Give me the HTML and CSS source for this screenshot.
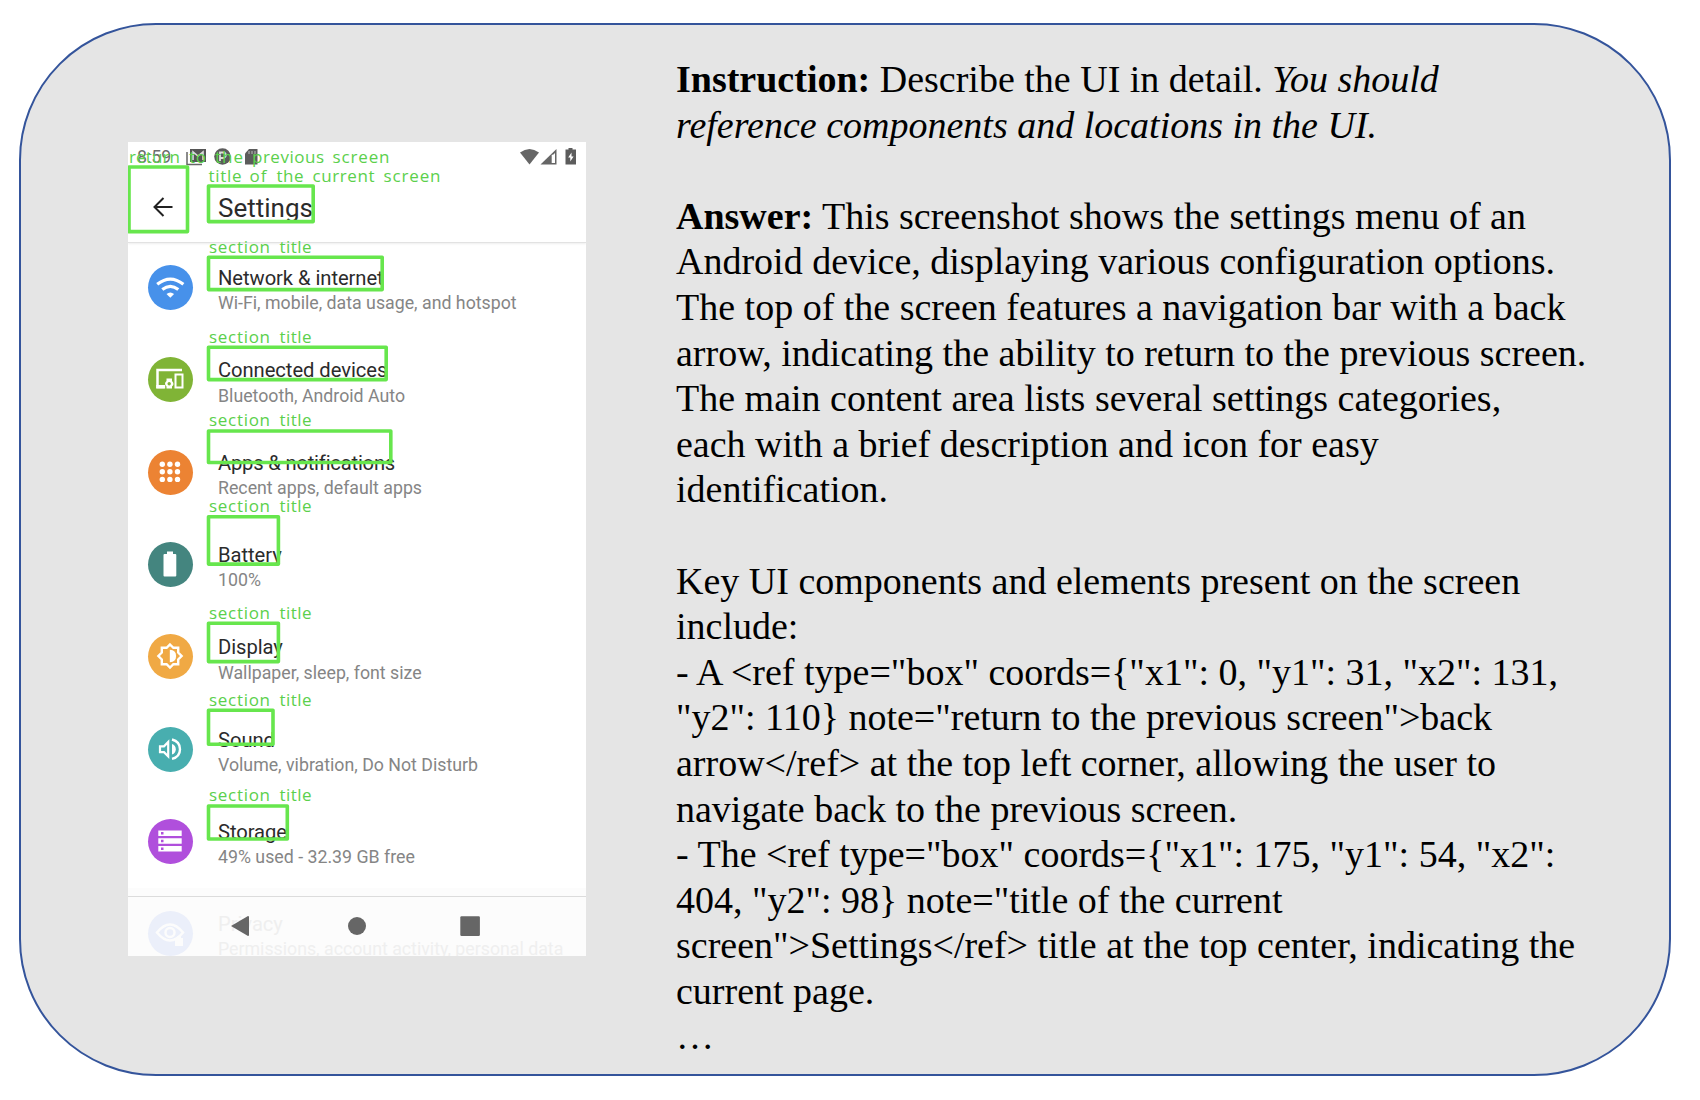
FILE: index.html
```html
<!DOCTYPE html>
<html lang="en">
<head>
<meta charset="utf-8">
<title>UI description example</title>
<link rel="stylesheet" href="styles.css">
</head>
<body>
<main class="card">
  <section class="phone">
    <header class="top">
      <div class="status">
        <span class="clock">8:59</span>
        <svg class="notif" width="74" height="18" viewBox="0 0 74 18">
          <path d="M1 4v12.500h15" fill="none" stroke="#666" stroke-width="1.500"/>
          <path d="M4 1h16v13H4z" fill="#555"/>
          <path d="M7 12V4l5 4 5-4v8" fill="none" stroke="#ddd" stroke-width="1.600"/>
          <circle cx="36.500" cy="8.500" r="8.300" fill="#5c5c5c"/>
          <path d="M34 13V4.500h3a2.600 2.600 0 0 1 0 5.500h-3" fill="none" stroke="#ddd" stroke-width="1.800"/>
          <path d="M63 1h8.500v15.500H59V5.500z" fill="#5c5c5c"/>
          <path d="M63 3v3M66 3v3M69 3v3" stroke="#bbb"/>
        </svg>
        <svg class="signals" width="57" height="18" viewBox="0 0 57 18">
          <path d="M0 4.500Q9.500-2.500 19 4.500L9.500 16.500z" fill="#666"/>
          <path d="M20.500 16.500L36.500 1v15.500z" fill="#666"/>
          <path d="M31.700 6.800h1.400L35 5v10h-3.300z" fill="#fff"/>
          <path d="M48.500 0h4v1.500H56v15H45.500v-15h3z" fill="#5c5c5c"/>
          <path d="M51.500 4.500l-3.300 5h2.100v4l3.300-5h-2.100z" fill="#fff"/>
        </svg>
      </div>
      <div class="appbar">
        <svg class="arrow" width="22" height="22" viewBox="0 0 22 22"><path d="M20.500 11H2.500M11.500 2l-9 9 9 9" fill="none" stroke="#222" stroke-width="2"/></svg>
        <h1 class="heading">Settings</h1>
      </div>
    </header>
    <div class="list">
      <div class="row">
        <svg class="icon blue" viewBox="0 0 45 45"><g fill="none" stroke="#fff" stroke-width="3.200"><path d="M9.200 19.300q13.100-10.400 26.200 0"/><path d="M14.300 24.500q8-6.400 16 0"/></g><path d="M18.500 29q3.800-3 7.600 0l-3.800 3.800z" fill="#fff"/></svg>
        <div class="texts"><div class="name">Network &amp; internet</div><div class="sub">Wi-Fi, mobile, data usage, and hotspot</div></div>
      </div>
      <div class="row">
        <svg class="icon green" viewBox="0 0 45 45"><path d="M34 13H9.500v17h7" fill="none" stroke="#fff" stroke-width="2.500"/><path d="M8.200 28h9v3.500h-9z" fill="#fff"/><rect x="27.500" y="17.500" width="7" height="13" fill="none" stroke="#fff" stroke-width="2"/><path d="M18.500 21.500h5.500v2.500q3 3 0 5.500v2h-5.500v-2q-3-3 0-5.500z" fill="#fff"/><circle cx="21.200" cy="26.800" r="1.700" fill="#80b436"/></svg>
        <div class="texts"><div class="name">Connected devices</div><div class="sub">Bluetooth, Android Auto</div></div>
      </div>
      <div class="row">
        <svg class="icon orange" viewBox="0 0 45 45"><g fill="#fff"><circle cx="14.300" cy="14.200" r="2.700"/><circle cx="21.900" cy="14.200" r="2.700"/><circle cx="29.500" cy="14.200" r="2.700"/><circle cx="14.300" cy="21.800" r="2.700"/><circle cx="21.900" cy="21.800" r="2.700"/><circle cx="29.500" cy="21.800" r="2.700"/><circle cx="14.300" cy="29.400" r="2.700"/><circle cx="21.900" cy="29.400" r="2.700"/><circle cx="29.500" cy="29.400" r="2.700"/></g></svg>
        <div class="texts"><div class="name tight">Apps &amp; notifications</div><div class="sub">Recent apps, default apps</div></div>
      </div>
      <div class="row">
        <svg class="icon teal" viewBox="0 0 45 45"><path d="M19 9.500h6V12h2.300q1 0 1 1v20.500q0 1-1 1H16.500q-1 0-1-1V13q0-1 1-1H19z" fill="#fff"/></svg>
        <div class="texts"><div class="name">Battery</div><div class="sub">100%</div></div>
      </div>
      <div class="row">
        <svg class="icon amber" viewBox="0 0 45 45"><path d="M22 10.500l3.400 3.300h4.800v4.800l3.400 3.400-3.400 3.400v4.800h-4.800L22 33.600l-3.400-3.400h-4.800v-4.800L10.400 22l3.400-3.400v-4.800h4.800z" fill="none" stroke="#fff" stroke-width="2.400"/><path d="M21.800 15.800q6.300.3 6.300 6.200t-6.300 6.200z" fill="#fff"/></svg>
        <div class="texts"><div class="name">Display</div><div class="sub">Wallpaper, sleep, font size</div></div>
      </div>
      <div class="row">
        <svg class="icon cyan" viewBox="0 0 45 45"><path d="M12 19.300h4l4.200-4.300v14.300L16 25.200h-4z" fill="none" stroke="#fff" stroke-width="2.200"/><path d="M24 17q3.800 1.300 3.800 5.200T24 27.400z" fill="#fff"/><path d="M24 12.500q8 2.100 8 9.700t-8 9.700" fill="none" stroke="#fff" stroke-width="2.400"/></svg>
        <div class="texts"><div class="name">Sound</div><div class="sub">Volume, vibration, Do Not Disturb</div></div>
      </div>
      <div class="row">
        <svg class="icon purple" viewBox="0 0 45 45"><path d="M10.300 11.500h23.400V17H10.300zM10.300 19.300h23.400v5.500H10.300zM10.300 27h23.400v5.500H10.300z" fill="#fff"/><path d="M13 13h2.500v2.500H13zM13 20.800h2.500v2.500H13zM13 28.500h2.500V31H13z" fill="#b04fdc"/></svg>
        <div class="texts"><div class="name">Storage</div><div class="sub">49% used - 32.39 GB free</div></div>
      </div>
      <div class="row faint">
        <svg class="icon pale" viewBox="0 0 45 45"><path d="M9 21.500q13-16 26 0q-13 16-26 0z" fill="none" stroke="#fcfcfc" stroke-width="2.500"/><circle cx="22" cy="21.500" r="4.500" fill="none" stroke="#fcfcfc" stroke-width="2.500"/><path d="M27 27h2v-1q2-3 4 0v1h2v8h-8z" fill="#fcfcfc"/></svg>
        <div class="texts"><div class="name">Privacy</div><div class="sub">Permissions, account activity, personal data</div></div>
      </div>
    </div>
    <svg class="navbar" width="458" height="60" viewBox="0 0 458 60">
      <path d="M0 .5h458" stroke="#dcdcdc" stroke-width="1.200"/>
      <path d="M103 30l17-10q1 0 1 1v18q0 1-1 1z" fill="#666"/>
      <circle cx="229" cy="30" r="9" fill="#666"/>
      <rect x="332.300" y="20.300" width="19.600" height="19.600" rx="1.200" fill="#666"/>
    </svg>
    <svg class="marks" width="458" height="814" viewBox="128 142 458 814">
      <g class="boxes">
        <rect x="129" y="167" width="58.500" height="64.600"/>
        <rect x="208.500" y="186" width="104.700" height="35.600"/>
        <rect x="208.500" y="257.300" width="173.700" height="32.300"/>
        <rect x="208.500" y="347.300" width="177.700" height="32.300"/>
        <rect x="208.500" y="431" width="182.300" height="31.500"/>
        <rect x="208.500" y="516.800" width="69.900" height="47.300"/>
        <rect x="208.500" y="623.300" width="69.900" height="38.300"/>
        <rect x="208.500" y="710.300" width="64.500" height="34"/>
        <rect x="208.500" y="806" width="78.800" height="33"/>
      </g>
      <g class="notes">
        <text y="162.500"><tspan x="129" textLength="51">return</tspan> <tspan x="189" textLength="17">to</tspan> <tspan x="215" textLength="28">the</tspan> <tspan x="252" textLength="72">previous</tspan> <tspan x="332.500" textLength="57">screen</tspan></text>
        <text y="181.500"><tspan x="208.500" textLength="33">title</tspan> <tspan x="249.500" textLength="17">of</tspan> <tspan x="276.500" textLength="27">the</tspan> <tspan x="312.500" textLength="62">current</tspan> <tspan x="383.500" textLength="57">screen</tspan></text>
        <text y="252.500"><tspan x="209" textLength="61">section</tspan> <tspan x="279.500" textLength="32">title</tspan></text>
        <text y="342.500"><tspan x="209" textLength="61">section</tspan> <tspan x="279.500" textLength="32">title</tspan></text>
        <text y="426.200"><tspan x="209" textLength="61">section</tspan> <tspan x="279.500" textLength="32">title</tspan></text>
        <text y="511.500"><tspan x="209" textLength="61">section</tspan> <tspan x="279.500" textLength="32">title</tspan></text>
        <text y="618.500"><tspan x="209" textLength="61">section</tspan> <tspan x="279.500" textLength="32">title</tspan></text>
        <text y="705.500"><tspan x="209" textLength="61">section</tspan> <tspan x="279.500" textLength="32">title</tspan></text>
        <text y="801.200"><tspan x="209" textLength="61">section</tspan> <tspan x="279.500" textLength="32">title</tspan></text>
      </g>
    </svg>
  </section>
  <section class="prose">
    <p><b>Instruction:</b> Describe the UI in detail. <i>You should<br>reference components and locations in the UI.</i></p>
    <p><b>Answer:</b> This screenshot shows the settings menu of an<br>Android device, displaying various configuration options.<br>The top of the screen features a navigation bar with a back<br>arrow, indicating the ability to return to the previous screen.<br>The main content area lists several settings categories,<br>each with a brief description and icon for easy<br>identification.</p>
    <p>Key UI components and elements present on the screen<br>include:<br>- A &lt;ref type="box" coords={"x1": 0, "y1": 31, "x2": 131,<br>"y2": 110} note="return to the previous screen"&gt;back<br>arrow&lt;/ref&gt; at the top left corner, allowing the user to<br>navigate back to the previous screen.<br>- The &lt;ref type="box" coords={"x1": 175, "y1": 54, "x2":<br>404, "y2": 98} note="title of the current<br>screen"&gt;Settings&lt;/ref&gt; title at the top center, indicating the<br>current page.<br>…</p>
  </section>
</main>
</body>
</html>
```
FILE: styles.css
```css
* { box-sizing: border-box; }
body { margin: 0; background: #fff; overflow: hidden; }
.card {
  display: flex;
  align-items: flex-start;
  gap: 90px;
  width: 1652px;
  height: 1053px;
  margin: 23px 0 0 19px;
  padding-left: 107px;
  background: #e5e5e5;
  border: 2px solid #34549b;
  border-radius: 137px;
}
.phone {
  position: relative;
  flex: none;
  width: 458px;
  height: 814px;
  margin-top: 117px;
  overflow: hidden;
  background: #fff;
  font-family: Roboto, "Liberation Sans", sans-serif;
}
.top { height: 101px; border-bottom: 1px solid #e2e2e2; box-shadow: 0 1px 2px #eee; }
.status { display: flex; height: 30px; padding: 5px 9px 0; color: #6c6c6c; }
.clock { width: 49px; padding-top: 1px; font-size: 17.8px; line-height: 18px; }
.status svg { margin-top: 1px; }
.signals { margin-left: auto; }
.appbar { display: flex; align-items: center; height: 71px; padding-left: 24px; }
.arrow { margin-bottom: 1px; }
.heading { margin: 0 0 0 44px; font-size: 26px; font-weight: 400; line-height: 30px; color: #2b2b2b; }
.list { margin-top: -1px; }
.row { display: flex; height: 92.3px; padding-left: 19.500px; }
.icon { flex: none; width: 45px; height: 45px; margin-top: 23.200px; border-radius: 50%; }
.blue { background: #4791ea; }
.green { background: #80b436; }
.orange { background: #ec8333; }
.teal { background: #44857f; }
.amber { background: #f0a944; }
.cyan { background: #48aeaf; }
.purple { background: #b04fdc; }
.pale { background: #ebeffa; }
.texts { margin: 24.200px 0 0 25.500px; white-space: nowrap; }
.name { height: 25.200px; font-size: 20.200px; line-height: 24px; letter-spacing: -.06px; color: #2b2b2b; }
.tight { letter-spacing: -.2px; }
.sub { font-size: 17.750px; line-height: 24px; color: #858585; }
.faint .name, .faint .sub { color: #efefef; }
.faint { background: #fcfcfc; }
.navbar { position: absolute; left: 0; top: 754px; }
.marks { position: absolute; left: 0; top: 0; }
.boxes { fill: none; stroke: #67e64d; stroke-width: 3.600; stroke-linejoin: round; }
.notes { fill: #5bd04c; font: 400 17px "Open Sans", "DejaVu Sans", sans-serif; }
.prose {
  padding-top: 32px;
  font: 38px/45.600px "Liberation Serif", "Times New Roman", serif;
  color: #000;
  white-space: nowrap;
}
.prose p { margin: 0 0 45.600px; }
```
